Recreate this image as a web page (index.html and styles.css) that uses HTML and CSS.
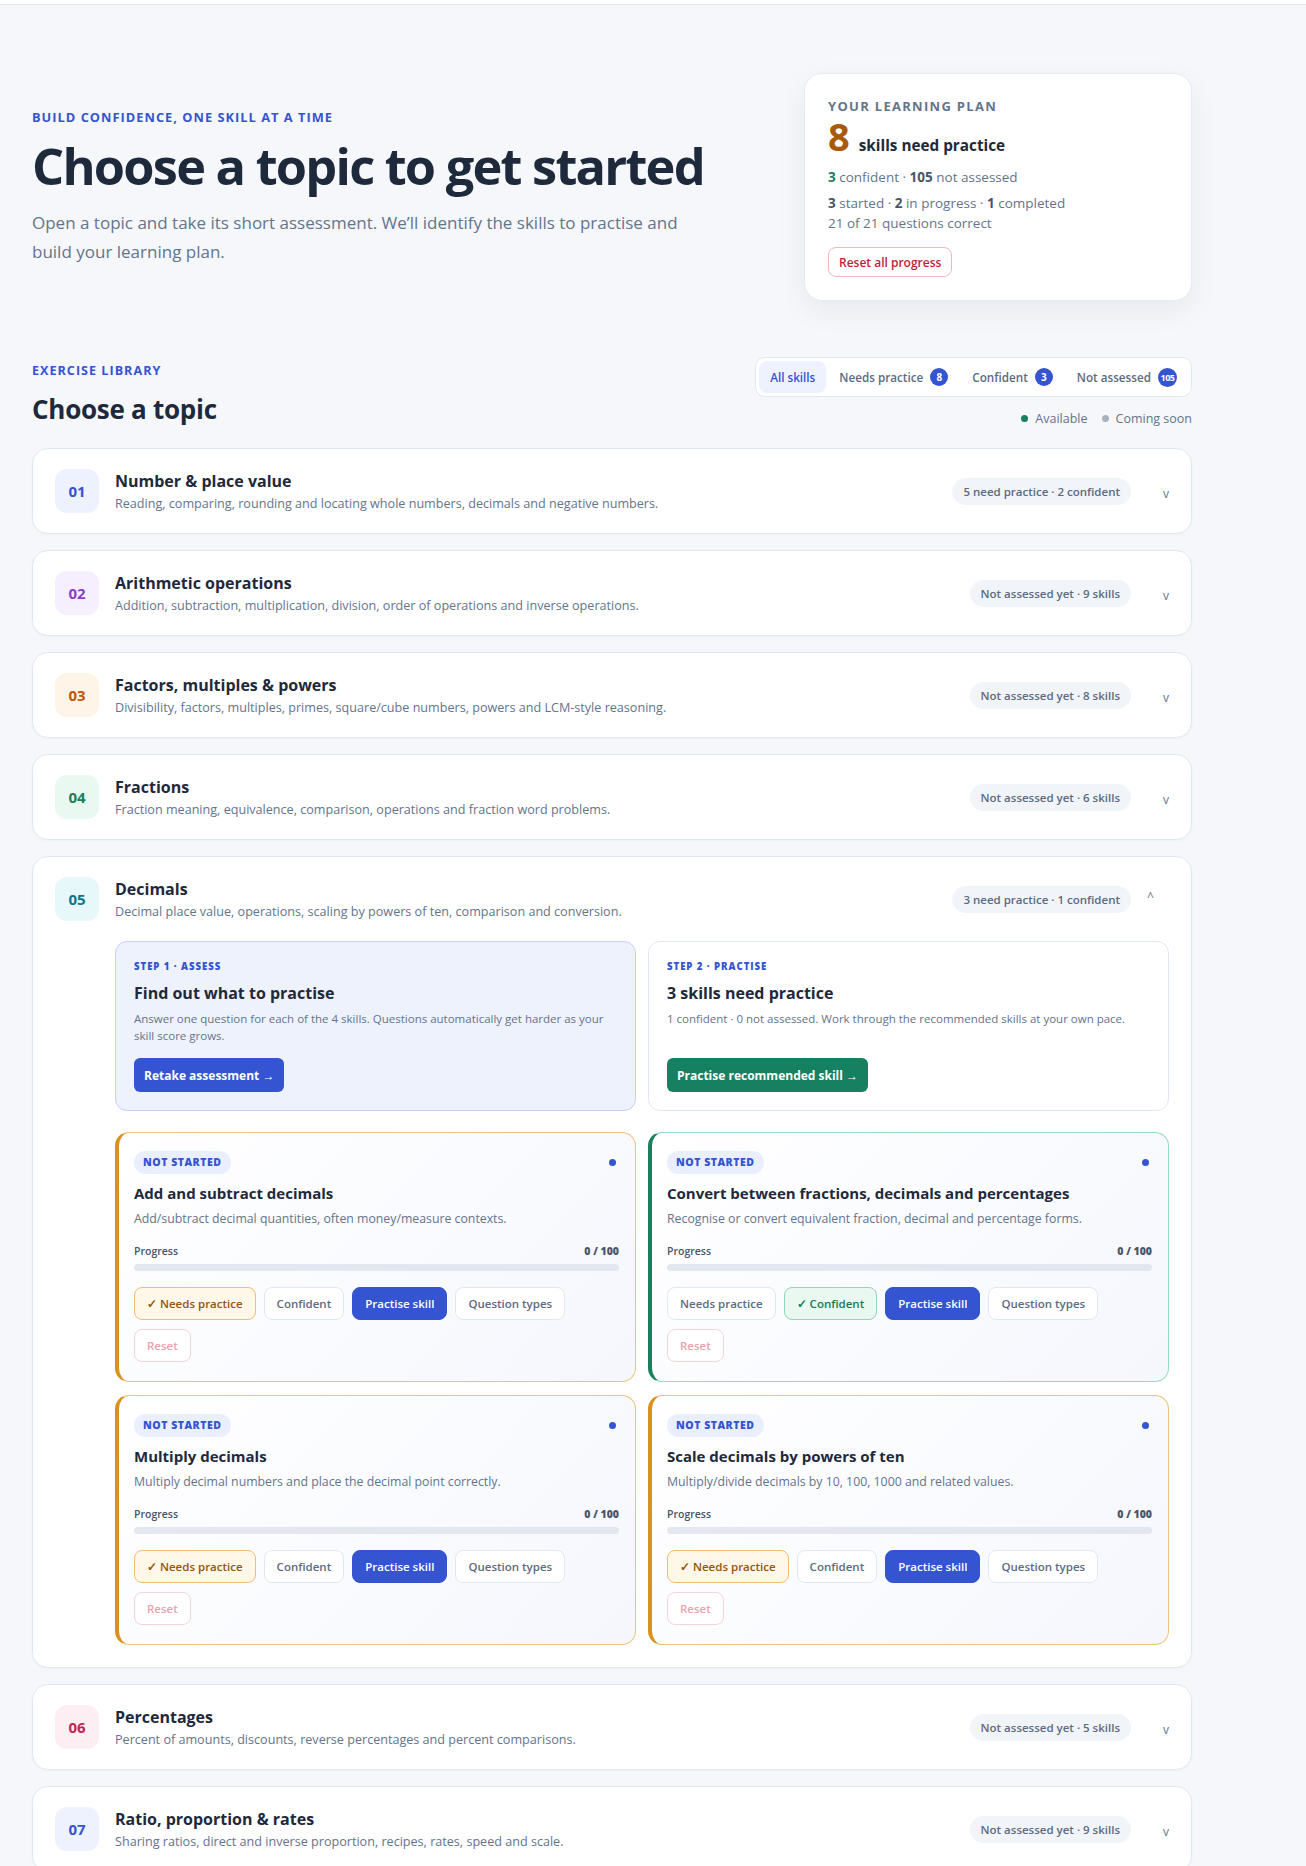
FILE: index.html
```html
<!DOCTYPE html>
<html lang="en">
<head>
    <meta charset="UTF-8">
    <title>Choose a topic</title>
    <link rel="stylesheet" href="styles.css">
</head>
<body>
    <div class="topbar"></div>
    <main class="page">
        <section class="hero">
            <div class="hero-text">
                <p class="eyebrow">Build confidence, one skill at a time</p>
                <h1>Choose a topic to get started</h1>
                <p class="lead">Open a topic and take its short assessment. We’ll identify the skills to practise and build your learning plan.</p>
            </div>
            <aside class="plan-card">
                <p class="plan-label">Your learning plan</p>
                <div class="plan-count">
                    <span class="plan-num">8</span>
                    <span class="plan-text">skills need practice</span>
                </div>
                <p class="plan-line"><b class="ok">3</b> confident · <b>105</b> not assessed</p>
                <p class="plan-line plan-stats"><b>3</b> started · <b>2</b> in progress · <b>1</b> completed<br>21 of 21 questions correct</p>
                <button class="btn-reset-all">Reset all progress</button>
            </aside>
        </section>

        <section class="library">
            <div class="library-head">
                <div>
                    <p class="eyebrow eyebrow-sm">Exercise library</p>
                    <h2>Choose a topic</h2>
                </div>
                <div class="library-tools">
                    <div class="filters">
                        <button class="filter active">All skills</button>
                        <button class="filter">Needs practice <span class="count">8</span></button>
                        <button class="filter">Confident <span class="count">3</span></button>
                        <button class="filter">Not assessed <span class="count wide">105</span></button>
                    </div>
                    <div class="legend">
                        <span><i class="dot dot-on"></i>Available</span>
                        <span><i class="dot dot-off"></i>Coming soon</span>
                    </div>
                </div>
            </div>

            <div class="topics">
                <article class="topic">
                    <div class="topic-head">
                        <div class="topic-num c-blue">01</div>
                        <div class="topic-info">
                            <h3>Number &amp; place value</h3>
                            <p>Reading, comparing, rounding and locating whole numbers, decimals and negative numbers.</p>
                        </div>
                        <span class="topic-badge">5 need practice · 2 confident</span>
                        <span class="chev">v</span>
                    </div>
                </article>

                <article class="topic">
                    <div class="topic-head">
                        <div class="topic-num c-purple">02</div>
                        <div class="topic-info">
                            <h3>Arithmetic operations</h3>
                            <p>Addition, subtraction, multiplication, division, order of operations and inverse operations.</p>
                        </div>
                        <span class="topic-badge">Not assessed yet · 9 skills</span>
                        <span class="chev">v</span>
                    </div>
                </article>

                <article class="topic">
                    <div class="topic-head">
                        <div class="topic-num c-orange">03</div>
                        <div class="topic-info">
                            <h3>Factors, multiples &amp; powers</h3>
                            <p>Divisibility, factors, multiples, primes, square/cube numbers, powers and LCM-style reasoning.</p>
                        </div>
                        <span class="topic-badge">Not assessed yet · 8 skills</span>
                        <span class="chev">v</span>
                    </div>
                </article>

                <article class="topic">
                    <div class="topic-head">
                        <div class="topic-num c-green">04</div>
                        <div class="topic-info">
                            <h3>Fractions</h3>
                            <p>Fraction meaning, equivalence, comparison, operations and fraction word problems.</p>
                        </div>
                        <span class="topic-badge">Not assessed yet · 6 skills</span>
                        <span class="chev">v</span>
                    </div>
                </article>

                <article class="topic open">
                    <div class="topic-head">
                        <div class="topic-num c-cyan">05</div>
                        <div class="topic-info">
                            <h3>Decimals</h3>
                            <p>Decimal place value, operations, scaling by powers of ten, comparison and conversion.</p>
                        </div>
                        <span class="topic-badge">3 need practice · 1 confident</span>
                        <span class="chev up">^</span>
                    </div>

                    <div class="topic-body">
                        <div class="steps">
                            <div class="step step-assess">
                                <p class="step-label">Step 1 · Assess</p>
                                <h4>Find out what to practise</h4>
                                <p class="step-desc">Answer one question for each of the 4 skills. Questions automatically get harder as your skill score grows.</p>
                                <button class="btn btn-blue">Retake assessment →</button>
                            </div>
                            <div class="step">
                                <p class="step-label">Step 2 · Practise</p>
                                <h4>3 skills need practice</h4>
                                <p class="step-desc">1 confident · 0 not assessed. Work through the recommended skills at your own pace.</p>
                                <button class="btn btn-green">Practise recommended skill →</button>
                            </div>
                        </div>

                        <div class="skills">
                            <div class="skill amber">
                                <div class="skill-top">
                                    <span class="status">Not started</span>
                                    <i class="skill-dot"></i>
                                </div>
                                <h5>Add and subtract decimals</h5>
                                <p class="skill-desc">Add/subtract decimal quantities, often money/measure contexts.</p>
                                <div class="progress-row"><span>Progress</span><b>0 / 100</b></div>
                                <div class="bar"></div>
                                <div class="actions">
                                    <button class="chip chip-need">✓ Needs practice</button>
                                    <button class="chip">Confident</button>
                                    <button class="chip chip-go">Practise skill</button>
                                    <button class="chip">Question types</button>
                                    <button class="chip chip-reset">Reset</button>
                                </div>
                            </div>

                            <div class="skill green">
                                <div class="skill-top">
                                    <span class="status">Not started</span>
                                    <i class="skill-dot"></i>
                                </div>
                                <h5>Convert between fractions, decimals and percentages</h5>
                                <p class="skill-desc">Recognise or convert equivalent fraction, decimal and percentage forms.</p>
                                <div class="progress-row"><span>Progress</span><b>0 / 100</b></div>
                                <div class="bar"></div>
                                <div class="actions">
                                    <button class="chip">Needs practice</button>
                                    <button class="chip chip-conf">✓ Confident</button>
                                    <button class="chip chip-go">Practise skill</button>
                                    <button class="chip">Question types</button>
                                    <button class="chip chip-reset">Reset</button>
                                </div>
                            </div>

                            <div class="skill amber">
                                <div class="skill-top">
                                    <span class="status">Not started</span>
                                    <i class="skill-dot"></i>
                                </div>
                                <h5>Multiply decimals</h5>
                                <p class="skill-desc">Multiply decimal numbers and place the decimal point correctly.</p>
                                <div class="progress-row"><span>Progress</span><b>0 / 100</b></div>
                                <div class="bar"></div>
                                <div class="actions">
                                    <button class="chip chip-need">✓ Needs practice</button>
                                    <button class="chip">Confident</button>
                                    <button class="chip chip-go">Practise skill</button>
                                    <button class="chip">Question types</button>
                                    <button class="chip chip-reset">Reset</button>
                                </div>
                            </div>

                            <div class="skill amber">
                                <div class="skill-top">
                                    <span class="status">Not started</span>
                                    <i class="skill-dot"></i>
                                </div>
                                <h5>Scale decimals by powers of ten</h5>
                                <p class="skill-desc">Multiply/divide decimals by 10, 100, 1000 and related values.</p>
                                <div class="progress-row"><span>Progress</span><b>0 / 100</b></div>
                                <div class="bar"></div>
                                <div class="actions">
                                    <button class="chip chip-need">✓ Needs practice</button>
                                    <button class="chip">Confident</button>
                                    <button class="chip chip-go">Practise skill</button>
                                    <button class="chip">Question types</button>
                                    <button class="chip chip-reset">Reset</button>
                                </div>
                            </div>
                        </div>
                    </div>
                </article>

                <article class="topic">
                    <div class="topic-head">
                        <div class="topic-num c-rose">06</div>
                        <div class="topic-info">
                            <h3>Percentages</h3>
                            <p>Percent of amounts, discounts, reverse percentages and percent comparisons.</p>
                        </div>
                        <span class="topic-badge">Not assessed yet · 5 skills</span>
                        <span class="chev">v</span>
                    </div>
                </article>

                <article class="topic">
                    <div class="topic-head">
                        <div class="topic-num c-blue">07</div>
                        <div class="topic-info">
                            <h3>Ratio, proportion &amp; rates</h3>
                            <p>Sharing ratios, direct and inverse proportion, recipes, rates, speed and scale.</p>
                        </div>
                        <span class="topic-badge">Not assessed yet · 9 skills</span>
                        <span class="chev">v</span>
                    </div>
                </article>
            </div>
        </section>
    </main>
</body>
</html>
```

FILE: styles.css
```css
body {
    margin: 0;
    background: #f5f7fb;
    font-family: "Open Sans", "Noto Sans", sans-serif;
    color: #1e293b;
}
button {
    font-family: inherit;
    cursor: pointer;
}
.topbar {
    height: 4px;
    background: #fff;
    border-bottom: 1px solid #e2e8f0;
}
.page {
    max-width: 1160px;
    padding: 0 32px 40px;
}

/* hero */
.hero {
    display: flex;
    justify-content: space-between;
    align-items: center;
    padding-top: 68px;
}
.eyebrow {
    margin: 0;
    font-size: 12.8px;
    line-height: 18px;
    font-weight: 700;
    letter-spacing: 0.08em;
    text-transform: uppercase;
    color: #3454d1;
}
.hero h1 {
    margin: 12px 0 14px;
    font-size: 50.5px;
    line-height: 56px;
    font-weight: 700;
    letter-spacing: -0.035em;
    color: #1e293b;
}
.lead {
    margin: 0;
    max-width: 670px;
    font-size: 17px;
    line-height: 29px;
    color: #64748b;
}
.plan-card {
    width: 388px;
    box-sizing: border-box;
    background: #fff;
    border: 1px solid #e6eaf1;
    border-radius: 18px;
    padding: 23px 24px 23px 23px;
    box-shadow: 0 10px 30px rgba(15, 23, 42, 0.06);
}
.plan-label {
    margin: 0;
    font-size: 13px;
    line-height: 18px;
    font-weight: 700;
    letter-spacing: 0.1em;
    text-transform: uppercase;
    color: #64748b;
}
.plan-count {
    display: flex;
    align-items: baseline;
    gap: 9px;
    margin-top: 2px;
}
.plan-num {
    font-size: 38px;
    line-height: 38px;
    font-weight: 700;
    color: #a85a0a;
}
.plan-text {
    font-size: 15.3px;
    font-weight: 700;
    color: #1e293b;
}
.plan-line {
    margin: 12px 0 0;
    font-size: 13.5px;
    line-height: 20px;
    color: #64748b;
}
.plan-line b {
    color: #475569;
}
.plan-line b.ok {
    color: #178060;
}
.plan-stats {
    margin-top: 6px;
}
.btn-reset-all {
    margin-top: 14px;
    height: 30px;
    padding: 0 10px;
    background: #fff;
    border: 1px solid #f0b9c1;
    border-radius: 8px;
    color: #be1e3c;
    font-size: 12px;
    font-weight: 600;
}

/* library */
.library {
    margin-top: 56px;
}
.library-head {
    display: flex;
    justify-content: space-between;
    align-items: flex-end;
    margin-bottom: 21px;
}
.eyebrow-sm {
    font-size: 12.6px;
    line-height: 16px;
    margin-bottom: 12px;
}
.library h2 {
    margin: 0;
    font-size: 26px;
    line-height: 36px;
    font-weight: 700;
    letter-spacing: -0.01em;
}
.library-tools {
    display: flex;
    flex-direction: column;
    align-items: flex-end;
    gap: 14px;
}
.filters {
    display: flex;
    gap: 2px;
    padding: 3px;
    background: #fff;
    border: 1px solid #e2e8f0;
    border-radius: 10px;
}
.filter {
    display: flex;
    align-items: center;
    gap: 7px;
    height: 32px;
    padding: 0 11px;
    background: none;
    border: 0;
    border-radius: 8px;
    font-size: 11.7px;
    font-weight: 600;
    color: #5b6b82;
}
.filter.active {
    background: #eef2ff;
    color: #3454d1;
}
.count {
    display: inline-flex;
    align-items: center;
    justify-content: center;
    width: 18px;
    height: 18px;
    border-radius: 50%;
    background: #3454d1;
    color: #fff;
    font-size: 10px;
    font-weight: 700;
}
.count.wide {
    width: 19px;
    height: 19px;
    font-size: 9px;
    letter-spacing: -0.06em;
}
.legend {
    display: flex;
    gap: 14px;
    font-size: 12.5px;
    line-height: 16px;
    color: #64748b;
}
.dot {
    display: inline-block;
    width: 7px;
    height: 7px;
    border-radius: 50%;
    margin-right: 7px;
    vertical-align: 1px;
}
.dot-on { background: #178060; }
.dot-off { background: #a7b1c2; }

/* topics */
.topics {
    display: flex;
    flex-direction: column;
    gap: 16px;
}
.topic {
    background: #fff;
    border: 1px solid #e2e8f0;
    border-radius: 16px;
    padding: 20px 22px;
    box-shadow: 0 1px 3px rgba(15, 23, 42, 0.03);
}
.topic-head {
    display: flex;
    align-items: center;
    gap: 16px;
}
.topic-num {
    flex: none;
    width: 44px;
    height: 44px;
    border-radius: 12px;
    display: flex;
    align-items: center;
    justify-content: center;
    font-size: 15px;
    font-weight: 700;
}
.c-blue { background: #eef2ff; color: #3454d1; }
.c-purple { background: #f6efff; color: #8a3fc4; }
.c-orange { background: #fff4e8; color: #c2570c; }
.c-green { background: #e9f8f1; color: #17805c; }
.c-cyan { background: #e7f8fb; color: #0e7490; }
.c-rose { background: #fdeef3; color: #c0265a; }
.topic-info {
    flex: 1;
}
.topic-info h3 {
    margin: 0;
    font-size: 16px;
    line-height: 22px;
    font-weight: 700;
    color: #1e293b;
}
.topic-info p {
    margin: 3px 0 0;
    font-size: 12.6px;
    line-height: 18px;
    color: #64748b;
}
.topic-badge {
    flex: none;
    height: 27px;
    line-height: 27px;
    padding: 0 11px;
    border-radius: 999px;
    background: #f1f5f9;
    color: #5b6b82;
    font-size: 11.5px;
    font-weight: 600;
}
.chev {
    flex: none;
    width: 22px;
    text-align: right;
    font-size: 12px;
    color: #64748b;
    margin-top: 4px;
}
.chev.up {
    text-align: left;
    margin-top: -6px;
}

/* expanded topic */
.topic-body {
    margin: 20px 0 2px 60px;
}
.steps {
    display: grid;
    grid-template-columns: 1fr 1fr;
    gap: 12px;
}
.step {
    display: flex;
    flex-direction: column;
    align-items: flex-start;
    padding: 18px 18px;
    border: 1px solid #e2e8f0;
    border-radius: 12px;
    background: #fff;
}
.step-assess {
    background: #eef2fd;
    border-color: #c5d0f6;
}
.step-label {
    margin: 0;
    font-size: 9.6px;
    line-height: 14px;
    font-weight: 800;
    letter-spacing: 0.1em;
    text-transform: uppercase;
    color: #3454d1;
}
.step h4 {
    margin: 8px 0 0;
    font-size: 16px;
    line-height: 22px;
    font-weight: 700;
}
.step-desc {
    margin: 6px 0 14px;
    font-size: 11.5px;
    line-height: 17px;
    color: #64748b;
}
.btn {
    margin-top: auto;
    height: 34px;
    padding: 0 10px;
    border: 0;
    border-radius: 6px;
    color: #fff;
    font-size: 12px;
    font-weight: 700;
}
.btn-blue { background: #3454d1; }
.btn-green { background: #178060; }

.skills {
    display: grid;
    grid-template-columns: 1fr 1fr;
    gap: 13px 12px;
    margin-top: 21px;
}
.skill {
    padding: 18px 16px 19px 15px;
    border: 1px solid #ecc27c;
    border-left: 4px solid #d9911f;
    border-radius: 14px;
    background: linear-gradient(135deg, #ffffff, #f5f7fd);
}
.skill.green {
    border-color: #93dbbf;
    border-left-color: #17805c;
}
.skill-top {
    display: flex;
    justify-content: space-between;
    align-items: center;
}
.status {
    height: 23px;
    line-height: 23px;
    padding: 0 9px;
    border-radius: 999px;
    background: #eaeffd;
    color: #3454d1;
    font-size: 10.5px;
    font-weight: 800;
    letter-spacing: 0.05em;
    text-transform: uppercase;
}
.skill-dot {
    width: 7px;
    height: 7px;
    border-radius: 50%;
    background: #3454d1;
    margin-right: 3px;
}
.skill h5 {
    margin: 9px 0 0;
    font-size: 15px;
    line-height: 20px;
    font-weight: 700;
}
.skill-desc {
    margin: 7px 0 0;
    font-size: 12.3px;
    line-height: 18px;
    color: #64748b;
}
.progress-row {
    display: flex;
    justify-content: space-between;
    margin-top: 15px;
    font-size: 10.5px;
    line-height: 16px;
    font-weight: 600;
    color: #475569;
}
.bar {
    height: 7px;
    margin-top: 5px;
    border-radius: 999px;
    background: #e3e8f0;
}
.actions {
    display: flex;
    flex-wrap: wrap;
    gap: 9px 8px;
    margin-top: 16px;
}
.chip {
    height: 33px;
    padding: 0 12px;
    background: #fff;
    border: 1px solid #e2e8f0;
    border-radius: 8px;
    color: #5b6b82;
    font-size: 11.5px;
    font-weight: 600;
}
.chip-need {
    background: #fff7e8;
    border-color: #efbf6f;
    color: #94560a;
}
.chip-conf {
    background: #e9f8f1;
    border-color: #8ed7b8;
    color: #177a55;
}
.chip-go {
    background: #3454d1;
    border-color: #3454d1;
    color: #fff;
}
.chip-reset {
    border-color: #f5d5da;
    color: #eba2ad;
}
```
